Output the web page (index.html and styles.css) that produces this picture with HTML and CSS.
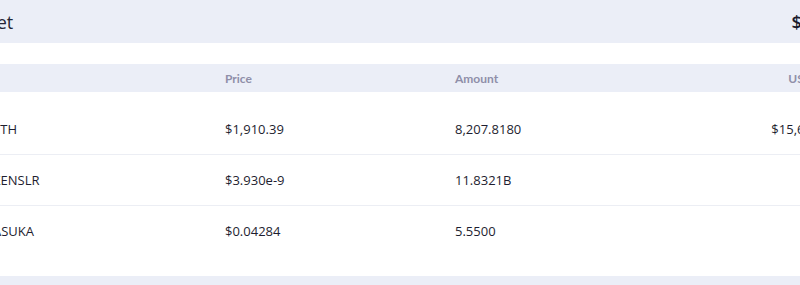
FILE: index.html
```html
<!DOCTYPE html>
<html lang="en">
<head>
<meta charset="utf-8">
<title>Wallet</title>
<link rel="stylesheet" href="styles.css">
</head>
<body>
<div class="viewport">
  <div class="wallet">
    <div class="wallet-head">
      <span class="wallet-title">Wallet</span>
      <span class="wallet-total">$15,680,180</span>
    </div>
    <div class="table">
      <div class="thead row">
        <span class="th">Token</span>
        <span class="th">Price</span>
        <span class="th">Amount</span>
        <span class="th num">USD Value</span>
        <span class="th"></span>
      </div>
      <div class="tbody">
        <div class="row tr">
          <span class="td token"><span class="token-icon"></span>ETH</span>
          <span class="td">$1,910.39</span>
          <span class="td">8,207.8180</span>
          <span class="td num">$15,680,133</span>
          <span class="td"></span>
        </div>
        <div class="row tr">
          <span class="td token"><span class="token-icon"></span>XENSLR</span>
          <span class="td">$3.930e-9</span>
          <span class="td">11.8321B</span>
          <span class="td num">$46.50</span>
          <span class="td"></span>
        </div>
        <div class="row tr">
          <span class="td token"><span class="token-icon"></span>ASUKA</span>
          <span class="td">$0.04284</span>
          <span class="td">5.5500</span>
          <span class="td num">$0.24</span>
          <span class="td"></span>
        </div>
      </div>
      <div class="tfoot"></div>
    </div>
  </div>
</div>
</body>
</html>
```
FILE: styles.css
```css
html, body {
  margin: 0;
  padding: 0;
  background: #ffffff;
}
body {
  font-family: "Open Sans", "Noto Sans", sans-serif;
  color: #1e1e30;
  overflow: hidden;
}
.viewport {
  width: 800px;
  height: 285px;
  overflow: hidden;
}
.wallet {
  width: 1000px;
  margin-left: -60px;
}
.wallet-head {
  height: 43px;
  background: #ebeef7;
  display: flex;
  align-items: center;
  justify-content: space-between;
  padding: 0 46px 0 21px;
}
.wallet-title {
  font-size: 18px;
  font-weight: 400;
  color: #252536;
}
.wallet-total {
  font-size: 18px;
  font-weight: 600;
  color: #1a1a2c;
}
.table {
  margin-top: 21px;
}
.row {
  display: grid;
  grid-template-columns: 261px 230px 230px 160px 1fr;
  align-items: center;
  padding: 0 24px;
}
.thead {
  height: 28px;
  background: #ebeef7;
}
.th {
  font-family: "Lato", "Open Sans", sans-serif;
  font-size: 12px;
  font-weight: 700;
  color: #8f8fa9;
}
.num {
  text-align: right;
}
.tbody {
  padding: 12px 0 20px;
}
.tr {
  height: 50px;
}
.tr + .tr {
  border-top: 1px solid #eceef4;
}
.td {
  font-size: 13px;
  color: #1e1e30;
}
.token {
  display: flex;
  align-items: center;
  gap: 9px;
}
.token-icon {
  width: 20px;
  height: 20px;
  border-radius: 50%;
  background: #d9dcea;
}
.tfoot {
  height: 12px;
  background: #ebeef7;
}
```
